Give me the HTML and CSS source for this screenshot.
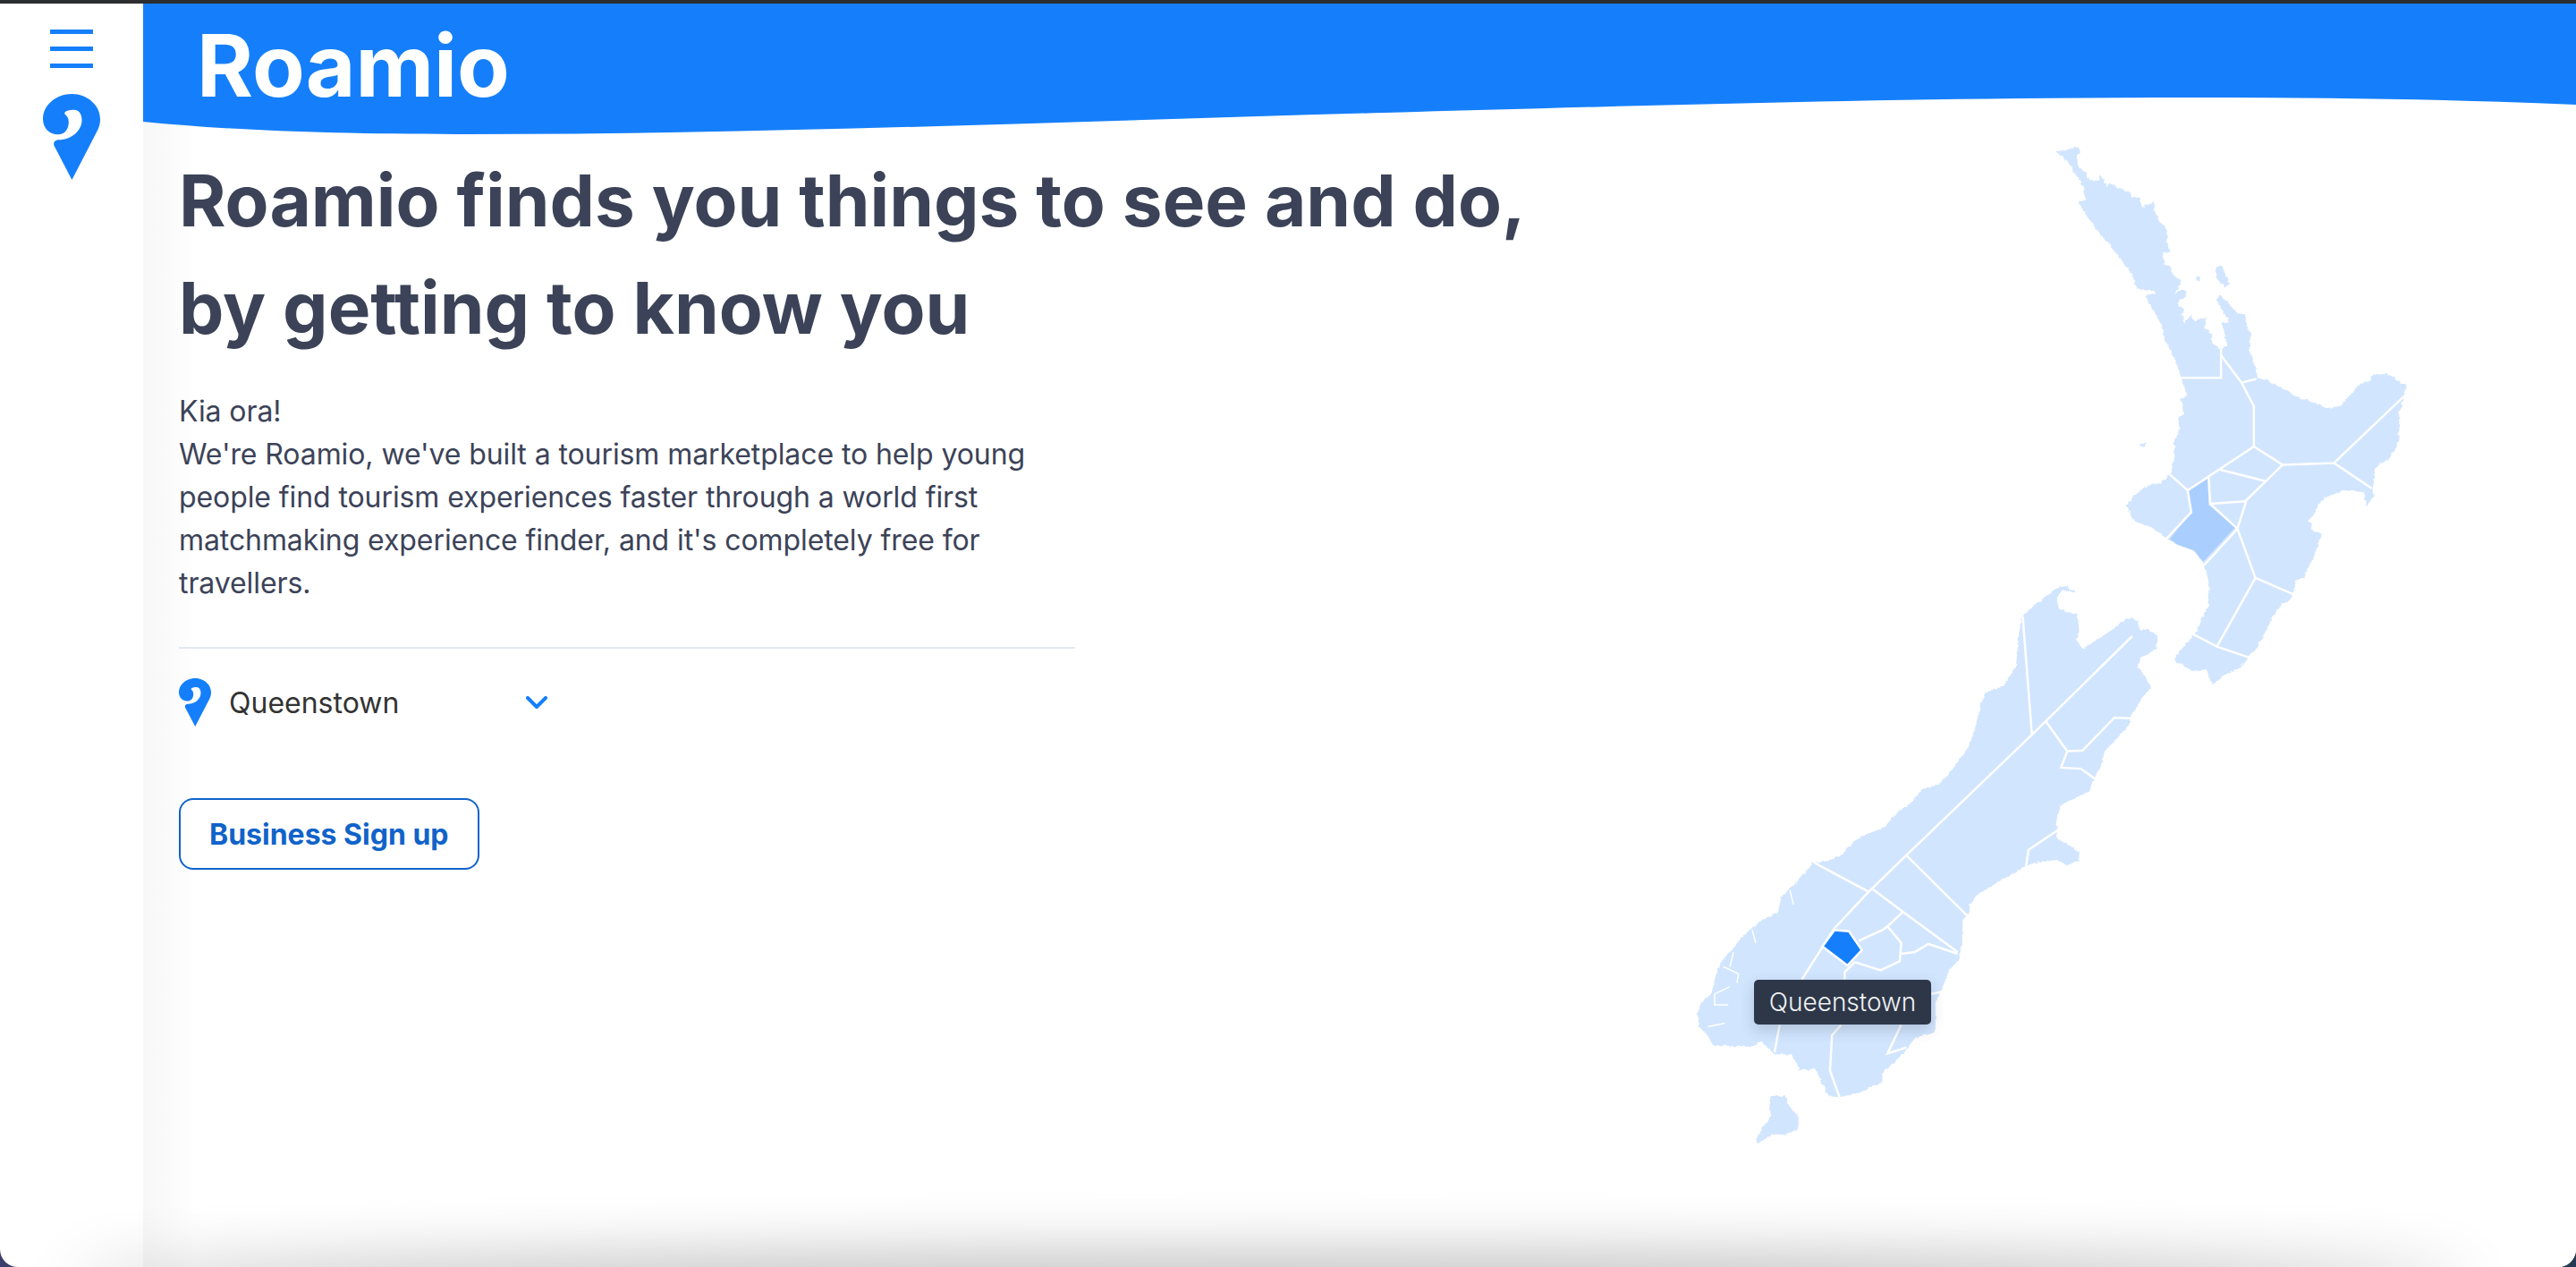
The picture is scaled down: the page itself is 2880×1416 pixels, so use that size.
FILE: index.html
```html
<!DOCTYPE html>
<html lang="en">
<head>
<meta charset="utf-8">
<title>Roamio</title>
<link rel="stylesheet" href="styles.css">
</head>
<body>
<div class="window">
  <aside class="sidebar">
    <button class="burger" aria-label="Menu"><span></span><span></span><span></span></button>
    <svg class="logo" viewBox="0 0 64 96"><path d="M32.4 0C50 0 64 13 64 28C64 33 63 36 61.4 40L32.4 96L12.6 58C11 54 14 51.3 18 51.3C32 51.3 43.5 41 43.5 29.3C43.5 22 40 17.7 34.6 17.7C30 17.7 25.5 18.5 24.3 21C23.5 23.5 28.8 24 28.8 31C28.8 40 24 45.3 17 45.3C7 45.3 0 38 0 28C0 13 14 0 32.4 0Z"/></svg>
  </aside>
  <main class="main">
    <header class="banner"><span class="brand">Roamio</span></header>
    <div class="content">
      <section class="intro">
        <h1>Roamio finds you things to see and do,<br>by getting to know you</h1>
        <p class="lead">Kia ora!<br>We're Roamio, we've built a tourism marketplace to help young people find tourism experiences faster through a world first matchmaking experience finder, and it's completely free for travellers.</p>
        <hr class="rule">
        <div class="location">
          <svg class="pin" viewBox="0 0 64 96"><path d="M32.4 0C50 0 64 13 64 28C64 33 63 36 61.4 40L32.4 96L12.6 58C11 54 14 51.3 18 51.3C32 51.3 43.5 41 43.5 29.3C43.5 22 40 17.7 34.6 17.7C30 17.7 25.5 18.5 24.3 21C23.5 23.5 28.8 24 28.8 31C28.8 40 24 45.3 17 45.3C7 45.3 0 38 0 28C0 13 14 0 32.4 0Z"/></svg>
          <span class="place">Queenstown</span>
          <svg class="chevron" viewBox="0 0 24 14"><path d="M2 2L12 12L22 2"/></svg>
        </div>
        <a class="signup" href="#">Business Sign up</a>
      </section>
      <div class="mapwrap">
        <svg class="map" viewBox="1890 155 810 1130">
          <defs>
            <filter id="rough" x="-5%" y="-5%" width="110%" height="110%">
              <feTurbulence type="fractalNoise" baseFrequency="0.09" numOctaves="2" seed="4" result="noise"/>
              <feDisplacementMap in="SourceGraphic" in2="noise" scale="9" xChannelSelector="R" yChannelSelector="G"/>
            </filter>
          </defs>
          <g class="north" transform="translate(1850 140) scale(.574 .408)">
            <g class="coast">
              <polygon class="land" points="782,72 800,68 825,60 828,68 822,90 826,115 840,130 845,150 865,150 866,135 875,150 880,170 885,158 905,172 925,182 930,198 945,198 948,225 972,212 975,240 985,265 997,290 998,320 1002,345 990,350 992,378 1003,385 1012,415 1027,425 1022,440 1012,462 1025,450 1037,455 1035,470 1022,478 1020,495 1030,505 1025,520 1032,540 1045,520 1050,540 1062,530 1075,525 1072,555 1085,570 1088,600 1100,613 1115,603 1110,570 1103,540 1120,540 1095,480 1100,465 1120,490 1135,515 1150,518 1152,545 1160,570 1160,625 1170,665 1172,690 1195,700 1228,725 1260,750 1295,765 1305,775 1335,770 1360,730 1375,708 1395,700 1400,682 1430,682 1445,698 1465,712 1460,745 1450,790 1450,815 1448,870 1430,915 1405,935 1398,1000 1400,1012 1388,1045 1380,1005 1340,1000 1300,1025 1285,1060 1275,1080 1282,1110 1300,1120 1288,1165 1275,1205 1265,1240 1250,1245 1240,1300 1220,1310 1205,1345 1190,1385 1175,1425 1155,1460 1135,1490 1105,1510 1085,1533 1075,1490 1045,1495 1018,1470 1012,1460 1035,1420 1052,1395 1062,1360 1078,1320 1080,1260 1072,1205 1055,1170 1035,1155 1000,1135 985,1120 965,1100 935,1085 918,1040 940,1005 965,985 985,980 1003,955 1012,915 1012,860 1022,840 1020,800 1030,790 1025,750 1037,740 1025,690 1012,640 995,590 985,540 955,470 965,462 980,462 960,450 940,450 930,410 900,350 860,285 835,235 827,210 838,205 835,170 810,110"/>
              <polygon class="land" points="1095,385 1105,385 1112,410 1120,435 1110,445 1098,425 1092,400"/>
              <polygon class="land" points="1055,415 1063,412 1062,425 1055,425"/>
              <polygon class="land" points="945,875 958,868 955,878 947,880"/>
            </g>
            <polygon class="hilite" points="1038,1003 1077,968 1079,1040 1130,1102 1068,1196 1050,1165 1020,1150 1003,1135 1043,1060"/>
            <polyline class="line" points="1025,692 1103,692 1103,612"/>
            <polyline class="line" points="1103,630 1143,705 1167,770 1167,880 1038,1000 1002,955"/>
            <polyline class="line" points="1143,705 1172,695"/>
            <polyline class="line" points="1167,880 1223,930 1323,925 1465,735"/>
            <polyline class="line" points="1323,925 1397,995"/>
            <polyline class="line" points="1223,930 1150,1030 1082,1037 1079,965"/>
            <polyline class="line" points="1100,943 1190,975"/>
            <polyline class="line" points="1038,1000 1045,1060 995,1135"/>
            <polyline class="line" points="1082,1037 1135,1105 1152,1030"/>
            <polyline class="line" points="1135,1105 1070,1205"/>
            <polyline class="line" points="1135,1105 1170,1240 1245,1285"/>
            <polyline class="line" points="1170,1240 1095,1428 1050,1395"/>
            <polyline class="line" points="1095,1428 1158,1458"/>
          </g>
          <g class="south" transform="translate(1850 660) scale(.3827 .408)">
            <g class="coast">
              <polygon class="land" points="1075,70 1110,40 1150,10 1176,-8 1205,-12 1232,6 1190,-2 1175,20 1180,50 1210,60 1235,65 1240,110 1230,135 1250,160 1300,130 1340,105 1380,75 1410,80 1415,110 1440,105 1470,125 1465,160 1420,185 1410,210 1430,230 1450,265 1420,300 1390,345 1385,370 1350,405 1315,440 1300,490 1280,520 1270,550 1235,565 1190,585 1175,620 1175,680 1205,695 1240,715 1240,740 1205,752 1175,738 1110,745 1080,757 1000,800 940,835 920,860 920,880 900,900 898,960 890,1010 860,1040 840,1090 820,1130 820,1210 760,1225 735,1260 690,1300 665,1320 665,1345 600,1375 540,1388 505,1385 470,1310 425,1315 400,1270 350,1270 310,1235 285,1250 170,1245 155,1220 130,1195 125,1160 135,1130 165,1105 180,1050 200,1010 230,980 270,935 310,905 360,880 370,840 400,810 430,780 465,745 510,740 545,725 585,685 625,665 670,650 700,615 750,580 780,545 830,530 870,490 915,430 935,380 950,320 965,280 1020,260 1055,210 1065,110"/>
              <polygon class="land" points="340,1385 380,1385 395,1415 420,1440 420,1475 380,1490 345,1490 300,1515 295,1505 320,1465 340,1440 335,1400"/>
            </g>
            <polyline class="line" points="1075,70 1102,395"/>
            <polyline class="line" points="1395,125 1140,360 1102,395 735,725 625,825 465,745"/>
            <polyline class="line" points="625,825 525,925 430,1065"/>
            <polyline class="line" points="365,1190 350,1265"/>
            <polyline class="line" points="1142,358 1205,440 1250,438 1343,348 1390,350"/>
            <polyline class="line" points="1205,440 1187,485 1245,488 1285,515"/>
            <polyline class="line" points="1175,658 1092,710 1085,755"/>
            <polyline class="line" points="735,725 912,890"/>
            <polyline class="line" points="637,818 725,880 885,990"/>
            <polyline class="line" points="725,880 680,920 720,965 716,1015 660,1040 585,1018 555,1045 555,1065"/>
            <polyline class="line" points="680,920 665,930 595,960"/>
            <polyline class="line" points="720,995 760,990 800,968 885,995"/>
            <polyline class="line" points="808,1105 845,1098"/>
            <polyline class="line" points="545,1190 518,1218 512,1315 540,1388"/>
            <polyline class="line" points="720,1190 680,1268 735,1252"/>
            <polyline class="line thin" points="395,820 405,860"/>
            <polyline class="line thin" points="200,1030 245,1050 240,1075"/>
            <polyline class="line thin" points="175,1105 175,1135 215,1135"/>
            <polyline class="line thin" points="230,990 220,1030"/>
            <polyline class="line thin" points="285,930 295,965"/>
            <polyline class="line thin" points="175,1105 220,1085"/>
            <polyline class="line thin" points="155,1195 205,1185"/>
            <polygon class="selected" points="525,930 567,933 605,985 563,1027 490,975"/>
          </g>
        </svg>
        <div class="tooltip">Queenstown</div>
      </div>
    </div>
  </main>
</div>
</body>
</html>
```
FILE: styles.css
```css
* { box-sizing: border-box; }
html, body { margin: 0; height: 100%; }
body {
  overflow: hidden;
  background: linear-gradient(90deg, #3a3f6b, #253a50);
  font-family: Inter, "Liberation Sans", sans-serif;
}
.window {
  position: relative;
  display: flex;
  height: 100vh;
  overflow: hidden;
  background: #fff;
  border-top: 4px solid #2b2d30;
  border-radius: 0 0 20px 20px;
}
.window::after {
  content: "";
  position: absolute;
  left: 90px;
  right: 130px;
  bottom: -40px;
  height: 40px;
  border-radius: 50%;
  box-shadow: 0 0 70px 10px rgba(0, 0, 0, .3);
}
.sidebar {
  flex: 0 0 160px;
  display: flex;
  flex-direction: column;
  align-items: center;
  padding-top: 29px;
}
.burger {
  display: flex;
  flex-direction: column;
  gap: 14px;
  width: 48px;
  padding: 0;
  border: 0;
  background: none;
}
.burger span { height: 5px; background: #157ffb; }
.logo { width: 64px; height: 96px; margin-top: 29px; fill: #157ffb; }
.main {
  flex: 1;
  min-width: 0;
  background: linear-gradient(90deg, #f7f7f7, #fff 60px);
}
.banner {
  height: 151px;
  padding: 11px 0 0 60px;
  background: #157ffb;
  clip-path: path("M0 0H2720V113C2580 107 2440 105 2290 105C1950 105 1650 115 1388 122C1050 131 700 146 364 146C220 146 100 142 0 132Z");
}
.brand {
  display: block;
  font-size: 96px;
  line-height: 116px;
  font-weight: 700;
  color: #fff;
}
.content {
  display: flex;
  justify-content: space-between;
  padding-right: 180px;
}
.intro { padding: 9px 0 0 40px; width: 1042px; }
h1 {
  margin: 0;
  width: 1600px;
  font-size: 80px;
  line-height: 120px;
  font-weight: 700;
  color: #3c4358;
}
.lead {
  margin: 32px 0 0;
  font-size: 32px;
  line-height: 48px;
  letter-spacing: -.09px;
  color: #3c4358;
}
.rule {
  height: 2px;
  margin: 47px 0 0;
  border: 0;
  background: #e2e8f0;
}
.location {
  display: flex;
  align-items: center;
  width: 412px;
  margin-top: 33px;
  gap: 20px;
}
.pin { width: 36px; height: 54px; fill: #157ffb; }
.place { flex: 1; font-size: 32px; color: #333; }
.chevron {
  width: 24px;
  height: 14px;
  fill: none;
  stroke: #157ffb;
  stroke-width: 4;
  stroke-linecap: round;
  stroke-linejoin: round;
}
.signup {
  display: inline-block;
  margin-top: 80px;
  padding: 0 32px;
  height: 80px;
  line-height: 78px;
  border: 2px solid #1063c9;
  border-radius: 16px;
  font-size: 32px;
  font-weight: 700;
  color: #1063c9;
  text-decoration: none;
}
.mapwrap { position: relative; width: 810px; height: 1130px; }
.map { display: block; width: 810px; height: 1130px; }
.coast { filter: url(#rough); }
.land { fill: #d1e5fe; }
.hilite { fill: #aacfff; }
.selected { fill: #157ffb; stroke: #fff; stroke-width: 2.5; vector-effect: non-scaling-stroke; }
.line {
  fill: none;
  stroke: #fff;
  stroke-width: 2.5;
  vector-effect: non-scaling-stroke;
}
.line.thin { stroke-width: 1.5; }
.tooltip {
  position: absolute;
  left: 71px;
  top: 940px;
  width: 198px;
  height: 50px;
  line-height: 50px;
  text-align: center;
  font-size: 28px;
  font-weight: 300;
  color: #f0f1f3;
  background: #2d3748;
  border-radius: 5px;
  box-shadow: 0 6px 16px rgba(45, 55, 72, .2);
}
```
